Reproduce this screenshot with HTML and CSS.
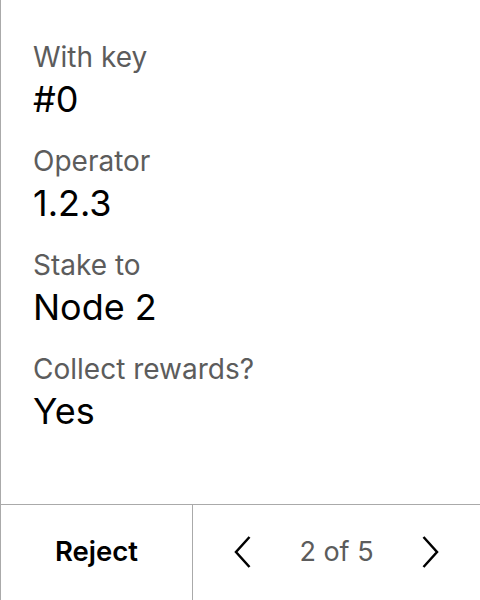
FILE: index.html
```html
<!DOCTYPE html>
<html>
<head>
<meta charset="utf-8">
<link rel="stylesheet" href="styles.css">
</head>
<body>
<div class="screen">
  <div class="details">
    <div class="row">
      <div class="label">With key</div>
      <div class="value">#0</div>
    </div>
    <div class="row">
      <div class="label">Operator</div>
      <div class="value">1.2.3</div>
    </div>
    <div class="row">
      <div class="label">Stake to</div>
      <div class="value">Node 2</div>
    </div>
    <div class="row">
      <div class="label">Collect rewards?</div>
      <div class="value">Yes</div>
    </div>
  </div>
  <div class="footer">
    <div class="reject">Reject</div>
    <div class="pager">
      <svg class="chev" width="17" height="32" viewBox="0 0 17 32"><path d="M15.5 1 L2 16 L15.5 31" fill="none" stroke="#000" stroke-width="2.5"/></svg>
      <span class="count">2 of 5</span>
      <svg class="chev" width="17" height="32" viewBox="0 0 17 32"><path d="M1.5 1 L15 16 L1.5 31" fill="none" stroke="#000" stroke-width="2.5"/></svg>
    </div>
  </div>
</div>
</body>
</html>
```
FILE: styles.css
```css
html, body {
  margin: 0;
  padding: 0;
  background: #fff;
}
body {
  font-family: Inter, "Noto Sans", sans-serif;
}
.screen {
  width: 480px;
  height: 600px;
  box-sizing: border-box;
  border-left: 1px solid #aaaaaa;
  display: flex;
  flex-direction: column;
}
.details {
  flex: 1;
  padding: 39.5px 0 0 32px;
  display: flex;
  flex-direction: column;
  gap: 23.5px;
}
.label {
  font-size: 28px;
  line-height: 34px;
  color: #5c5c5c;
  margin-bottom: 4.5px;
}
.value {
  font-size: 36px;
  line-height: 42px;
  color: #000;
}
.footer {
  height: 96px;
  box-sizing: border-box;
  border-top: 1px solid #aaaaaa;
  display: grid;
  grid-template-columns: 192px 1fr;
}
.reject {
  display: flex;
  align-items: center;
  justify-content: center;
  padding-bottom: 3px;
  font-size: 27.5px;
  font-weight: 600;
  color: #000;
  border-right: 1px solid #aaaaaa;
}
.pager {
  display: flex;
  align-items: center;
  justify-content: center;
  gap: 48px;
  padding-bottom: 2px;
}
.count {
  font-size: 27px;
  color: #5c5c5c;
}
```
